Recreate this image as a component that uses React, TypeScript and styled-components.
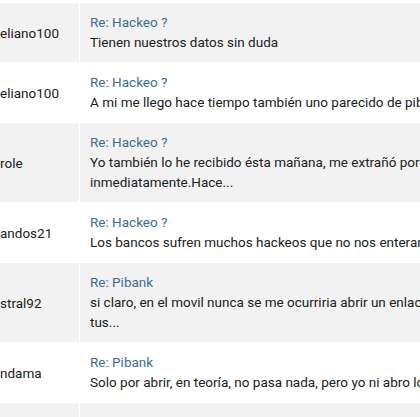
import React from "react";
import styled, { createGlobalStyle } from "styled-components";

const GlobalStyle = createGlobalStyle`
  html, body {
    margin: 0;
    padding: 0;
    background: #ffffff;
    overflow: hidden;
  }
  body {
    font-family: Roboto, "Noto Sans", Arial, sans-serif;
    color: #212121;
  }
`;

type Post = {
  author: string;
  subject: string;
  lines: string[];
};

const posts: Post[] = [
  { author: "eliano100", subject: "Re: Hackeo ?", lines: ["Tienen nuestros datos sin duda"] },
  {
    author: "eliano100",
    subject: "Re: Hackeo ?",
    lines: ["A mi me llego hace tiempo también uno parecido de pibank y lo borré"],
  },
  {
    author: "role",
    subject: "Re: Hackeo ?",
    lines: ["Yo también lo he recibido ésta mañana, me extrañó porque lo borré", "inmediatamente.Hace..."],
  },
  {
    author: "andos21",
    subject: "Re: Hackeo ?",
    lines: ["Los bancos sufren muchos hackeos que no nos enteramos"],
  },
  {
    author: "stral92",
    subject: "Re: Pibank",
    lines: ["si claro, en el movil nunca se me ocurriria abrir un enlace de", "tus..."],
  },
  {
    author: "ndama",
    subject: "Re: Pibank",
    lines: ["Solo por abrir, en teoría, no pasa nada, pero yo ni abro los correos"],
  },
  { author: "", subject: "Re: ING de K", lines: ["Lo mismo me pasó"] },
];

const App: React.FC = () => {
  return (
    <>
      <GlobalStyle />
      <Page>
        <Table>
          <tbody>
            {posts.map((p, i) => (
              <Row key={i} $striped={i % 2 === 0}>
                <AuthorCell>{p.author}</AuthorCell>
                <MessageCell>
                  <Subject href="#">{p.subject}</Subject>
                  <Body>
                    {p.lines.map((l, j) => (
                      <Line key={j}>{l}</Line>
                    ))}
                  </Body>
                </MessageCell>
              </Row>
            ))}
          </tbody>
        </Table>
      </Page>
    </>
  );
};

const Page = styled.div`
  width: 420px;
  height: 417px;
  overflow: hidden;
  padding-top: 2px;
  box-sizing: border-box;
`;

const Table = styled.table`
  border-collapse: separate;
  border-spacing: 1px 1px;
  margin-left: -1px;
  width: 640px;
  font-size: 13.5px;
  line-height: 20px;
`;

const Row = styled.tr<{ $striped: boolean }>`
  background: ${(p) => (p.$striped ? "#f2f2f2" : "#ffffff")};

  td {
    background: ${(p) => (p.$striped ? "#f2f2f2" : "#ffffff")};
  }
`;

const AuthorCell = styled.td`
  width: 79px;
  padding: 0;
  vertical-align: middle;
  white-space: nowrap;
  overflow: hidden;
  color: #212121;
`;

const MessageCell = styled.td`
  padding: 9px 10px 10px 10px;
  vertical-align: top;
`;

const Subject = styled.a`
  display: block;
  color: #3b6e97;
  text-decoration: none;
`;

const Body = styled.div`
  color: #212121;
`;

const Line = styled.div`
  white-space: nowrap;
`;

export default App;
